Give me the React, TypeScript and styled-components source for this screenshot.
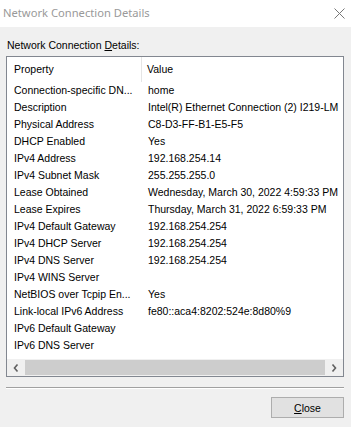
import React from "react";
import styled, { createGlobalStyle } from "styled-components";

const GlobalStyle = createGlobalStyle`
  html, body {
    margin: 0;
    padding: 0;
    background: #f0f0f0;
  }
`;

const Window = styled.div`
  width: 351px;
  height: 427px;
  display: flex;
  flex-direction: column;
  background: #f0f0f0;
  font-family: "Liberation Sans", Arial, sans-serif;
  font-size: 10.5px;
  color: #000;
  overflow: hidden;
`;

const TitleBar = styled.div`
  height: 27px;
  background: #fff;
  display: flex;
  align-items: center;
  justify-content: space-between;
  padding: 0 6px 0 3px;
`;

const Title = styled.span`
  font-family: "Noto Sans", "Open Sans", sans-serif;
  font-size: 11.2px;
  color: #999;
  padding-bottom: 2px;
`;

const Body = styled.div`
  flex: 1;
  display: flex;
  flex-direction: column;
  padding: 12px 7px 0 6px;
`;

const Label = styled.div`
  height: 13px;
  line-height: 13px;
  margin-bottom: 4px;
  padding-left: 1px;
`;

const ListBox = styled.div`
  border: 1px solid #828790;
  background: #fff;
  height: 319px;
  display: flex;
  flex-direction: column;
  overflow: hidden;
`;

const Table = styled.div`
  flex: 1;
  display: grid;
  grid-template-columns: 135px 1fr;
  grid-template-rows: 25px;
  grid-auto-rows: 17px;
  align-content: start;
  overflow: hidden;
`;

const HeadCell = styled.div<{ $first?: boolean }>`
  display: flex;
  align-items: center;
  padding-left: ${(p) => (p.$first ? "7px" : "5px")};
  padding-bottom: 1px;
  border-right: ${(p) => (p.$first ? "1px solid #e5e5e5" : "none")};
  white-space: nowrap;
`;

const Cell = styled.div<{ $first?: boolean }>`
  line-height: 17px;
  padding-left: ${(p) => (p.$first ? "7px" : "6px")};
  white-space: nowrap;
  overflow: hidden;
`;

const ScrollBar = styled.div`
  height: 17px;
  display: flex;
  align-items: stretch;
  background: #f0f0f0;
`;

const Arrow = styled.div`
  width: 18px;
  display: flex;
  align-items: center;
  justify-content: center;
`;

const Thumb = styled.div`
  flex: 1;
  background: #cdcdcd;
  margin: 1px 0;
`;

const Separator = styled.div`
  margin-top: 10px;
  height: 1px;
  background: #a0a0a0;
  border-bottom: 1px solid #fff;
`;

const Footer = styled.div`
  display: flex;
  justify-content: flex-end;
  padding-top: 8px;
`;

const Button = styled.button`
  width: 73px;
  height: 21px;
  background: #e1e1e1;
  border: 1px solid #adadad;
  font-family: "Liberation Sans", Arial, sans-serif;
  font-size: 10.5px;
  color: #000;
  padding: 0;
`;

const rows: [string, string][] = [
  ["Connection-specific DN...", "home"],
  ["Description", "Intel(R) Ethernet Connection (2) I219-LM"],
  ["Physical Address", "C8-D3-FF-B1-E5-F5"],
  ["DHCP Enabled", "Yes"],
  ["IPv4 Address", "192.168.254.14"],
  ["IPv4 Subnet Mask", "255.255.255.0"],
  ["Lease Obtained", "Wednesday, March 30, 2022 4:59:33 PM"],
  ["Lease Expires", "Thursday, March 31, 2022 6:59:33 PM"],
  ["IPv4 Default Gateway", "192.168.254.254"],
  ["IPv4 DHCP Server", "192.168.254.254"],
  ["IPv4 DNS Server", "192.168.254.254"],
  ["IPv4 WINS Server", ""],
  ["NetBIOS over Tcpip En...", "Yes"],
  ["Link-local IPv6 Address", "fe80::aca4:8202:524e:8d80%9"],
  ["IPv6 Default Gateway", ""],
  ["IPv6 DNS Server", ""],
];

const Chevron = ({ dir }: { dir: "left" | "right" }) => (
  <svg width="6" height="8" viewBox="0 0 6 8">
    <path
      d={dir === "left" ? "M4.5 0.5 L1.5 4 L4.5 7.5" : "M1.5 0.5 L4.5 4 L1.5 7.5"}
      fill="none"
      stroke="#606060"
      strokeWidth="1.6"
    />
  </svg>
);

const App = () => {
  return (
    <>
      <GlobalStyle />
      <Window>
        <TitleBar>
          <Title>Network Connection Details</Title>
          <svg width="11" height="11" viewBox="0 0 11 11">
            <path d="M0.5 0.5 L10.5 10.5 M10.5 0.5 L0.5 10.5" stroke="#777" strokeWidth="1" />
          </svg>
        </TitleBar>
        <Body>
          <Label>
            Network Connection <u>D</u>etails:
          </Label>
          <ListBox>
            <Table>
              <HeadCell $first>Property</HeadCell>
              <HeadCell>Value</HeadCell>
              {rows.map(([k, v]) => (
                <React.Fragment key={k}>
                  <Cell $first>{k}</Cell>
                  <Cell>{v}</Cell>
                </React.Fragment>
              ))}
            </Table>
            <ScrollBar>
              <Arrow>
                <Chevron dir="left" />
              </Arrow>
              <Thumb />
              <Arrow>
                <Chevron dir="right" />
              </Arrow>
            </ScrollBar>
          </ListBox>
          <Separator />
          <Footer>
            <Button>
              <u>C</u>lose
            </Button>
          </Footer>
        </Body>
      </Window>
    </>
  );
};

export default App;
